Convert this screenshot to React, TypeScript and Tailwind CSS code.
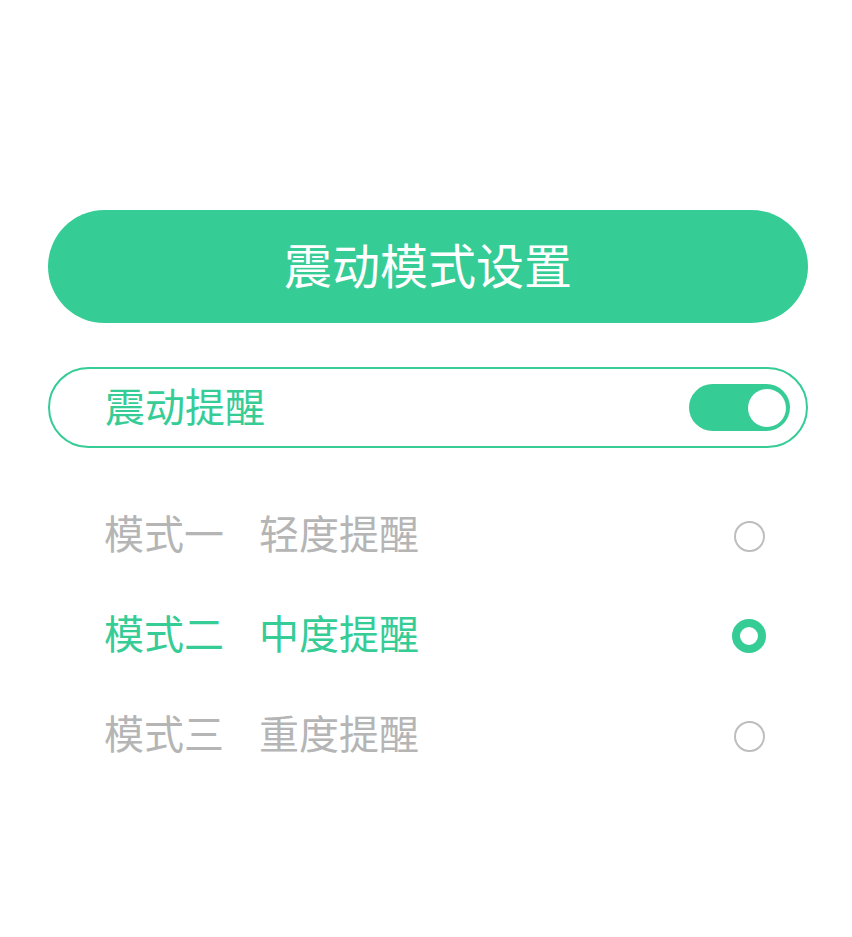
import React, { useState } from 'react';

const modes = [
  { name: '模式一', desc: '轻度提醒' },
  { name: '模式二', desc: '中度提醒' },
  { name: '模式三', desc: '重度提醒' },
];

const Radio: React.FC<{ checked: boolean }> = ({ checked }) =>
  checked ? (
    <div className="w-[34px] h-[34px] rounded-full border-[8px] border-[#36cc96] bg-white" />
  ) : (
    <div className="w-[31px] h-[31px] rounded-full border-2 border-[#bdbdbd] bg-white" />
  );

export default function App() {
  const [enabled, setEnabled] = useState(true);
  const [selected, setSelected] = useState(1);

  return (
    <div
      className="w-[852px] h-[937px] bg-white pl-[48px] pr-[44px] pt-[210px]"
      style={{ fontFamily: '"Noto Sans CJK SC", "Noto Sans", sans-serif' }}
    >
      <div className="h-[113px] rounded-full bg-[#36cc96] flex items-center justify-center text-white text-[48px] leading-none pb-[8px]">
        震动模式设置
      </div>

      <div className="mt-[44px] h-[81px] rounded-full border-2 border-[#36cc96] flex items-center justify-between pl-[55px] pr-[16px]">
        <span className="text-[40px] leading-none text-[#36cc96] pb-[6px]">震动提醒</span>
        <button
          onClick={() => setEnabled(!enabled)}
          className={`w-[101px] h-[47px] rounded-full flex items-center px-[4px] ${enabled ? 'bg-[#36cc96] justify-end' : 'bg-[#dddddd] justify-start'}`}
        >
          <div className="w-[38px] h-[38px] rounded-full bg-white" />
        </button>
      </div>

      <div className="mt-[38px] flex flex-col">
        {modes.map((m, i) => {
          const active = i === selected;
          return (
            <div
              key={i}
              onClick={() => setSelected(i)}
              className="h-[100px] flex items-center justify-between pl-[56px] pr-[42px] cursor-pointer"
            >
              <div className={`flex items-center text-[40px] leading-none pb-[8px] ${active ? 'text-[#36cc96]' : 'text-[#b5b5b5]'}`}>
                <span>{m.name}</span>
                <span className="ml-[35px]">{m.desc}</span>
              </div>
              <div className="w-[34px] flex justify-center">
                <Radio checked={active} />
              </div>
            </div>
          );
        })}
      </div>
    </div>
  );
}
